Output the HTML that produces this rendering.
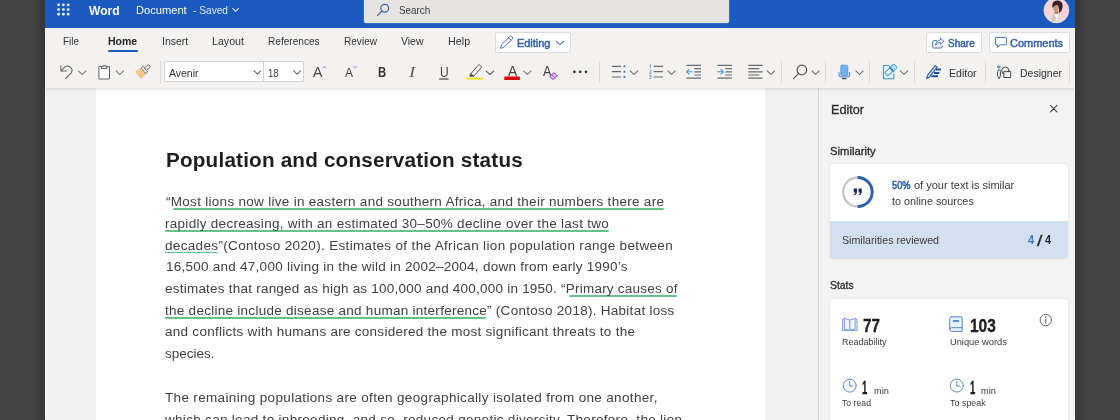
<!DOCTYPE html>
<html lang="en">
<head>
<meta charset="utf-8">
<title>Word - Document</title>
<style>
html,body{margin:0;padding:0;}
body{width:1120px;height:420px;overflow:hidden;position:relative;background:#444;font-family:"Liberation Sans",sans-serif;}
.abs{position:absolute;}
.t{position:absolute;white-space:pre;line-height:1;transform-origin:0 50%;filter:blur(.3px);}
#bandL{left:0;top:0;width:45px;height:420px;background:linear-gradient(to right,#444 0,#444 32px,#393939 44px,#383838 45px);}
#bandR{left:1075px;top:0;width:45px;height:420px;background:linear-gradient(to right,#383838 0,#3a3a3a 2px,#444 12px,#444 100%);}
#app{left:45px;top:0;width:1030px;height:420px;background:#f3f3f3;overflow:hidden;}
#hdr{left:45px;top:0;width:1030px;height:28px;background:#1b5abe;}
#search{left:364px;top:-2px;width:364.5px;height:24.5px;background:#e6e4e2;border-radius:0 0 2px 2px;box-shadow:0 0 1.5px rgba(255,255,255,.6);}
#ribbon{left:45px;top:28px;width:1030px;height:60px;background:#f3f2f1;box-shadow:0 1px 4px rgba(0,0,0,.14);}
#docbg{left:45px;top:88px;width:1030px;height:332px;background:#f2f2f2;}
#page{left:96px;top:88px;width:669px;height:332px;background:#fff;}
#pane{left:818px;top:88px;width:257px;height:332px;background:#f3f3f3;border-left:1px solid #d2d2d2;box-sizing:border-box;}
#edgeL{left:45px;top:28px;width:1px;height:392px;background:rgba(255,255,255,.55);}
#edgeR{left:1074px;top:28px;width:1px;height:392px;background:rgba(255,255,255,.55);}
.btn{background:#fff;border:1px solid #dddcdb;border-radius:2px;box-sizing:border-box;}
.sep{width:1px;background:#dad9d8;top:61px;height:22px;}
.card{background:#fff;border-radius:3px;box-shadow:0 0.5px 2px rgba(0,0,0,.12);}
.ul{height:1.6px;background:#66c387;border-radius:1px;}
svg{position:absolute;left:0;top:0;overflow:visible;filter:blur(.3px);}
</style>
</head>
<body>
<div id="bandL" class="abs"></div>
<div id="bandR" class="abs"></div>
<div id="app" class="abs"></div>
<div id="docbg" class="abs"></div>
<div id="page" class="abs"></div>
<div id="pane" class="abs"></div>
<div id="ribbon" class="abs"></div>
<div id="hdr" class="abs"></div>
<div id="search" class="abs"></div>
<div id="edgeL" class="abs"></div>
<div id="edgeR" class="abs"></div>

<!-- ribbon chrome -->
<div class="abs" style="left:108px;top:49.8px;width:29.5px;height:2.4px;background:#1b5abe;border-radius:1.2px"></div>
<div class="abs btn" style="left:494.5px;top:32px;width:76px;height:20.6px"></div>
<div class="abs btn" style="left:926.4px;top:32px;width:55.3px;height:20.6px"></div>
<div class="abs btn" style="left:988.5px;top:32px;width:81.3px;height:20.6px"></div>
<div class="abs" style="left:164px;top:61.4px;width:139.6px;height:21px;background:#fff;border:1px solid #d4d3d2;box-sizing:border-box;border-radius:1px"></div>
<div class="abs" style="left:263.2px;top:62px;width:1px;height:20px;background:#d4d3d2"></div>
<div class="abs sep" style="left:160.3px"></div>
<div class="abs sep" style="left:599.3px"></div>
<div class="abs sep" style="left:780.7px"></div>
<div class="abs sep" style="left:825.2px"></div>
<div class="abs sep" style="left:869.2px"></div>
<div class="abs sep" style="left:914px"></div>
<div class="abs sep" style="left:984.5px"></div>
<div class="abs sep" style="left:1069.3px"></div>

<!-- editor pane cards -->
<div class="abs card" style="left:829.5px;top:164.3px;width:238px;height:93.3px;overflow:hidden"><div class="abs" style="left:0;top:56.4px;width:238px;height:37px;background:#d3e0f2"></div></div>
<div class="abs card" style="left:829.5px;top:298.6px;width:238px;height:130px"></div>

<!-- document underlines -->
<div class="abs ul" style="left:172.5px;top:208.3px;width:491.5px"></div>
<div class="abs ul" style="left:165px;top:230px;width:444px"></div>
<div class="abs ul" style="left:165px;top:251.8px;width:53px"></div>
<div class="abs ul" style="left:569px;top:295.3px;width:108.4px"></div>
<div class="abs ul" style="left:165px;top:317px;width:321.4px"></div>

<span class="t" style='left:89.00px;top:4.00px;font-size:13px;color:#fff;font-weight:bold;transform:scaleX(0.9247);'>Word</span>
<span class="t" style='left:135.60px;top:5.00px;font-size:10.5px;color:#fff;transform:scaleX(1.0594);'>Document</span>
<span class="t" style='left:192.50px;top:5.00px;font-size:10.5px;color:#dfe8f6;transform:scaleX(0.9672);'>- Saved</span>
<span class="t" style='left:398.70px;top:5.00px;font-size:11px;color:#3a3a3a;transform:scaleX(0.8979);'>Search</span>
<span class="t" style='left:62.50px;top:36.00px;font-size:11px;color:#333;transform:scaleX(0.8966);'>File</span>
<span class="t" style='left:107.90px;top:36.00px;font-size:11px;color:#252525;font-weight:bold;transform:scaleX(0.9554);'>Home</span>
<span class="t" style='left:161.50px;top:36.00px;font-size:11px;color:#333;transform:scaleX(0.9558);'>Insert</span>
<span class="t" style='left:212.00px;top:36.00px;font-size:11px;color:#333;transform:scaleX(0.9688);'>Layout</span>
<span class="t" style='left:268.10px;top:36.00px;font-size:11px;color:#333;transform:scaleX(0.9171);'>References</span>
<span class="t" style='left:344.00px;top:36.00px;font-size:11px;color:#333;transform:scaleX(0.9147);'>Review</span>
<span class="t" style='left:401.30px;top:36.00px;font-size:11px;color:#333;transform:scaleX(0.9511);'>View</span>
<span class="t" style='left:447.80px;top:36.00px;font-size:11px;color:#333;transform:scaleX(0.9812);'>Help</span>
<span class="t" style='left:516.90px;top:39.00px;font-size:10.3px;color:#2d5cab;transform:scaleX(1.0608);-webkit-text-stroke:0.42px #2d5cab;'>Editing</span>
<span class="t" style='left:948.30px;top:39.00px;font-size:10.3px;color:#2d5cab;transform:scaleX(0.9715);-webkit-text-stroke:0.42px #2d5cab;'>Share</span>
<span class="t" style='left:1010.30px;top:39.00px;font-size:10.3px;color:#2d5cab;transform:scaleX(1.0647);-webkit-text-stroke:0.42px #2d5cab;'>Comments</span>
<span class="t" style='left:168.50px;top:68.00px;font-size:11px;color:#333;transform:scaleX(0.9521);'>Avenir</span>
<span class="t" style='left:267.80px;top:68.00px;font-size:11px;color:#333;transform:scaleX(0.8653);'>18</span>
<span class="t" style='left:312.50px;top:64.00px;font-size:15px;color:#444;transform:scaleX(0.9385);'>A</span>
<span class="t" style='left:345.00px;top:67.00px;font-size:12px;color:#444;transform:scaleX(0.9981);'>A</span>
<span class="t" style='left:377.50px;top:65.00px;font-size:14.7px;color:#333;font-weight:bold;transform:scaleX(0.7729);'>B</span>
<span class="t" style='left:409.40px;top:64.00px;font-size:15.5px;color:#5c5c5c;font-style:italic;font-family:"Liberation Serif", serif;transform:scaleX(1.1988);'>I</span>
<span class="t" style='left:439.50px;top:64.00px;font-size:15px;color:#444;transform:scaleX(0.8023);'>U</span>
<span class="t" style='left:507.60px;top:64.00px;font-size:14.4px;color:#444;transform:scaleX(0.9574);'>A</span>
<span class="t" style='left:542.80px;top:64.00px;font-size:14.6px;color:#444;transform:scaleX(0.8629);'>A</span>
<span class="t" style='left:949.40px;top:68.00px;font-size:11px;color:#333;transform:scaleX(0.9600);'>Editor</span>
<span class="t" style='left:1020.00px;top:68.00px;font-size:11px;color:#333;transform:scaleX(0.9539);'>Designer</span>
<span class="t" style='left:831.00px;top:104.00px;font-size:12.5px;color:#2a2a2a;transform:scaleX(1.0105);-webkit-text-stroke:0.3px #2a2a2a;'>Editor</span>
<span class="t" style='left:830.00px;top:146.00px;font-size:11px;color:#2a2a2a;transform:scaleX(1.0241);-webkit-text-stroke:0.3px #2a2a2a;'>Similarity</span>
<span class="t" style='left:892.00px;top:180.00px;font-size:10.5px;color:#2d5cab;transform:scaleX(0.8803);-webkit-text-stroke:0.5px #2d5cab;'>50%</span>
<span class="t" style='left:914.00px;top:180.00px;font-size:10.5px;color:#3a3a3a;transform:scaleX(1.0480);'>of your text is similar</span>
<span class="t" style='left:892.00px;top:196.00px;font-size:10.5px;color:#3a3a3a;transform:scaleX(1.0303);'>to online sources</span>
<span class="t" style='left:842.00px;top:235.00px;font-size:10.5px;color:#3a3a3a;transform:scaleX(1.0136);'>Similarities reviewed</span>
<span class="t" style='left:1028.10px;top:234.00px;font-size:12.4px;color:#3f72c0;font-weight:bold;transform:scaleX(0.8833);'>4</span>
<span class="t" style='left:1037.00px;top:234.00px;font-size:14.5px;color:#2a2a2a;transform:scaleX(1.3395);-webkit-text-stroke:0.3px #2a2a2a;'>/</span>
<span class="t" style='left:1045.30px;top:234.00px;font-size:12.4px;color:#1f2430;font-weight:bold;transform:scaleX(0.8833);'>4</span>
<span class="t" style='left:829.60px;top:280.00px;font-size:11px;color:#2a2a2a;transform:scaleX(0.9411);-webkit-text-stroke:0.3px #2a2a2a;'>Stats</span>
<span class="t" style='left:863.00px;top:318.00px;font-size:17.5px;color:#1c1c1c;font-weight:bold;transform:scaleX(0.8732);-webkit-text-stroke:0.3px #1c1c1c;'>77</span>
<span class="t" style='left:969.50px;top:318.00px;font-size:17.5px;color:#1c1c1c;font-weight:bold;transform:scaleX(0.8835);-webkit-text-stroke:0.3px #1c1c1c;'>103</span>
<span class="t" style='left:842.00px;top:338.00px;font-size:9px;color:#3a3a3a;transform:scaleX(0.9971);'>Readability</span>
<span class="t" style='left:949.80px;top:338.00px;font-size:9px;color:#3a3a3a;transform:scaleX(1.0321);'>Unique words</span>
<span class="t" style='left:862.30px;top:380.00px;font-size:17.5px;color:#1c1c1c;font-weight:bold;transform:scaleX(0.5445);-webkit-text-stroke:0.3px #1c1c1c;'>1</span>
<span class="t" style='left:873.60px;top:386.00px;font-size:9.5px;color:#3a3a3a;transform:scaleX(0.9665);'>min</span>
<span class="t" style='left:969.80px;top:380.00px;font-size:17.5px;color:#1c1c1c;font-weight:bold;transform:scaleX(0.5445);-webkit-text-stroke:0.3px #1c1c1c;'>1</span>
<span class="t" style='left:981.00px;top:386.00px;font-size:9.5px;color:#3a3a3a;transform:scaleX(0.9665);'>min</span>
<span class="t" style='left:842.00px;top:399.00px;font-size:9px;color:#3a3a3a;transform:scaleX(0.9657);'>To read</span>
<span class="t" style='left:949.60px;top:399.00px;font-size:9px;color:#3a3a3a;transform:scaleX(0.9936);'>To speak</span>
<span class="t" style='left:165.80px;top:151.00px;font-size:19.5px;color:#1e1e1e;font-weight:bold;letter-spacing:0.183px;transform:scaleX(1.06);'>Population and conservation status</span>
<span class="t" style='left:166.00px;top:196.00px;font-size:12.5px;color:#404040;letter-spacing:0.269px;transform:scaleX(1.08);'>“Most lions now live in eastern and southern Africa, and their numbers there are</span>
<span class="t" style='left:165.00px;top:218.00px;font-size:12.5px;color:#404040;letter-spacing:0.266px;transform:scaleX(1.08);'>rapidly decreasing, with an estimated 30–50% decline over the last two</span>
<span class="t" style='left:165.00px;top:240.00px;font-size:12.5px;color:#404040;letter-spacing:0.311px;transform:scaleX(1.08);'>decades”(Contoso 2020). Estimates of the African lion population range between</span>
<span class="t" style='left:166.00px;top:261.00px;font-size:12.5px;color:#404040;letter-spacing:0.234px;transform:scaleX(1.08);'>16,500 and 47,000 living in the wild in 2002–2004, down from early 1990’s</span>
<span class="t" style='left:165.00px;top:283.00px;font-size:12.5px;color:#404040;letter-spacing:0.209px;transform:scaleX(1.08);'>estimates that ranged as high as 100,000 and 400,000 in 1950. “Primary causes of</span>
<span class="t" style='left:165.00px;top:305.00px;font-size:12.5px;color:#404040;letter-spacing:0.252px;transform:scaleX(1.08);'>the decline include disease and human interference” (Contoso 2018). Habitat loss</span>
<span class="t" style='left:165.00px;top:326.00px;font-size:12.5px;color:#404040;letter-spacing:0.253px;transform:scaleX(1.08);'>and conflicts with humans are considered the most significant threats to the</span>
<span class="t" style='left:165.00px;top:348.00px;font-size:12.5px;color:#404040;letter-spacing:-0.004px;transform:scaleX(1.08);'>species.</span>
<span class="t" style='left:165.00px;top:392.00px;font-size:12.5px;color:#404040;letter-spacing:0.312px;transform:scaleX(1.08);'>The remaining populations are often geographically isolated from one another,</span>
<span class="t" style='left:165.00px;top:414.00px;font-size:12.5px;color:#404040;letter-spacing:0.281px;transform:scaleX(1.08);'>which can lead to inbreeding, and so, reduced genetic diversity. Therefore, the lion</span>

<svg width="1120" height="420" viewBox="0 0 1120 420" fill="none" stroke-linecap="round" stroke-linejoin="round">
<defs>
<clipPath id="avc"><circle cx="1056.4" cy="10.3" r="12.6"/></clipPath>
</defs>
<!-- waffle -->
<g fill="#fff">
<circle cx="58.6" cy="4.8" r="1.35"/><circle cx="63.4" cy="4.8" r="1.35"/><circle cx="68.2" cy="4.8" r="1.35"/>
<circle cx="58.6" cy="9.5" r="1.35"/><circle cx="63.4" cy="9.5" r="1.35"/><circle cx="68.2" cy="9.5" r="1.35"/>
<circle cx="58.6" cy="14.2" r="1.35"/><circle cx="63.4" cy="14.2" r="1.35"/><circle cx="68.2" cy="14.2" r="1.35"/>
</g>
<!-- saved chevron -->
<path d="M232.8 8.3 L235.7 11.3 L238.6 8.3" stroke="#dfe8f6" stroke-width="1.1"/>
<!-- header search -->
<g stroke="#3f5f9c" stroke-width="1.2"><circle cx="384.7" cy="8.2" r="3.9"/><path d="M381.9 11 L377.6 15.3"/></g>
<!-- avatar -->
<g clip-path="url(#avc)">
<rect x="1043" y="-3" width="27" height="27" fill="#f6d3d8"/>
<path d="M1048.5 24 C1048.8 17.5 1051 14 1054.4 12.8 L1060 12.4 C1063 13.6 1064.6 17 1065 24 Z" fill="#e4dcd3"/>
<path d="M1051.5 24 C1051.6 19 1052.6 15.5 1054.2 13.4 L1055.6 19 Z" fill="#cfc4b8"/>
<path d="M1054.8 13.6 L1056.8 21 L1058.6 13.4 Z" fill="#f8f5f2"/>
<path d="M1054.6 10.5 H1058.2 V14 H1054.6 Z" fill="#b98972"/>
<ellipse cx="1055.8" cy="7.8" rx="2.7" ry="3.7" fill="#c9977f"/>
<path d="M1052.6 8 C1051.4 3.2 1053.8 0.2 1057.6 0.4 C1061.6 0.6 1063.4 4 1062.4 7.8 C1061.800 10.6 1060.600 12.400 1058.800 13 C1059.600 10 1059 7 1057.700 5.200 C1056 4.700 1054.200 5.600 1052.600 8 Z" fill="#3b2023"/>
</g>
<circle cx="1056.4" cy="10.3" r="12.6" stroke="#efe3f2" stroke-opacity=".5" stroke-width=".8"/>

<!-- ===== toolbar row ===== -->
<g stroke="#646464" stroke-width="1.02">
<!-- undo -->
<path d="M60.9 65.7 V71 H66.2"/>
<path d="M61.3 70.7 L64.6 67.2 A4.4 4.4 0 0 1 71.2 72.9 L65.8 78.7"/>
<path d="M78.5 71 L82.2 74.5 L85.9 71"/>
<!-- clipboard -->
<path d="M101.4 66.6 H99.6 A0.7 0.7 0 0 0 98.9 67.3 V78.3 A0.7 0.7 0 0 0 99.6 79 H108.8 A0.7 0.7 0 0 0 109.5 78.3 V67.3 A0.7 0.7 0 0 0 108.8 66.6 H107" fill="#fbfbfb"/>
<path d="M101.5 68.6 V66.6 H102.8 A1.45 1.45 0 0 1 105.6 66.6 H106.9 V68.6 Z" fill="#f3f2f1"/>
<path d="M116.2 71 L119.8 74.5 L123.4 71"/>
<!-- font chevrons -->
<path d="M254 70.7 L257.4 74.2 L260.8 70.7"/>
<path d="M293.6 70.7 L297.1 74.2 L300.7 70.7"/>
<!-- chevrons -->
<path d="M486.2 71 L490 74.5 L493.8 71"/>
<path d="M523.7 71 L527.3 74.5 L531 71"/>
<path d="M630.2 70.8 L634 74.5 L637.8 70.8"/>
<path d="M667.9 70.8 L671.5 74.5 L675.2 70.8"/>
<path d="M767.3 70.8 L770.9 74.5 L774.6 70.8"/>
<path d="M812 70.8 L815.5 74.5 L819.1 70.8"/>
<path d="M855.9 70.8 L859.6 74.5 L863.2 70.8"/>
<path d="M900.4 70.8 L904 74.5 L907.7 70.8"/>
</g>
<!-- format painter -->
<g transform="translate(144.200 70.4) rotate(50)">
<path d="M-3.3 1 H3.3 L4.3 7.600 H-4.3 Z" fill="#f3c283" stroke="#efb56c" stroke-width=".5"/>
<path d="M-1.500 2 V7 M1.200 2 V7" stroke="#f8dcb4" stroke-width=".8"/>
<rect x="-3.400" y="-1.900" width="6.800" height="2.900" fill="#f6f5f4" stroke="#6a6a6a" stroke-width=".9"/>
<rect x="-1.300" y="-7" width="2.600" height="5.100" fill="#f6f5f4" stroke="#6a6a6a" stroke-width=".9"/>
</g>
<!-- grow/shrink carets -->
<path d="M322.6 68 L324.2 66.2 L325.8 68" stroke="#78abd6" stroke-width="1"/>
<path d="M353.6 66.3 L355.2 68.1 L356.8 66.3" stroke="#78abd6" stroke-width="1"/>
<!-- U underline -->
<path d="M439.2 79 H448.5" stroke="#505050" stroke-width="1.3" stroke-linecap="butt"/>
<!-- highlighter -->
<rect x="466.2" y="77.4" width="16.8" height="2.4" rx=".8" fill="#e8ea3c"/>
<path d="M473.2 74.6 L480.4 66.2 A1.2 1.2 0 0 0 480.2 64.6 L479 63.6 A1.2 1.2 0 0 0 477.4 63.8 L470.2 72.2 Z" transform="translate(0.7,1.5)" fill="#fff" stroke="#4d4d4d" stroke-width="1"/>
<path d="M470.900 73.700 L473.900 76.100 L470.5 76.700 L469.700 76.100 Z" fill="#4d4d4d" stroke="#4d4d4d" stroke-width=".6"/>
<!-- font colour bar -->
<rect x="504.3" y="76.4" width="15.5" height="3.5" rx=".5" fill="#d8000f"/>
<!-- eraser -->
<path d="M549.8 76.4 L554.2 72.8 L557.2 75.8 L552.8 79.4 Z" fill="#e3c4ee" stroke="#a863c4" stroke-width="1.1"/>
<path d="M551.8 74.8 L554.8 77.8" stroke="#a863c4" stroke-width="1"/>
<!-- more dots -->
<g fill="#333"><circle cx="574.4" cy="71.8" r="1.35"/><circle cx="580.2" cy="71.8" r="1.35"/><circle cx="586" cy="71.8" r="1.35"/></g>
<!-- bullets -->
<g stroke="#6a6a6a" stroke-width="1.2" stroke-linecap="butt">
<path d="M611.8 66.3 H621 M611.8 71.7 H621 M611.8 77 H621"/>
<path d="M653.6 66.3 H663 M653.6 71.7 H663 M653.6 77 H663"/>
<path d="M686.4 65.4 H701 M694.3 68.6 H701 M694.3 71.8 H701 M694.3 75 H701 M686.4 78.1 H701"/>
<path d="M717.5 65.4 H731.9 M725.5 68.6 H731.9 M725.5 71.8 H731.9 M725.5 75 H731.9 M717.5 78.1 H731.9"/>
<path d="M748.3 65.4 H762.6 M748.3 68.6 H759.4 M748.3 71.8 H762.6 M748.3 75 H759.4 M748.3 78.1 H762.6"/>
</g>
<g fill="#2f72b8"><circle cx="624.4" cy="66.3" r="1.05"/><circle cx="624.4" cy="71.7" r="1.05"/><circle cx="624.4" cy="77" r="1.05"/></g>
<g stroke="#4b93cc" stroke-width=".8">
<path d="M649.6 65.3 L650.5 64.6 V67.8"/>
<path d="M649.4 70.6 C649.9 69.8 651.4 69.9 651.3 71 C651.2 71.8 649.6 72.6 649.4 73.3 H651.5"/>
<path d="M649.4 75.6 H651.3 L650.3 76.9 C651.6 76.9 651.7 78.7 650.3 78.7 C649.8 78.7 649.5 78.5 649.3 78.2"/>
</g>
<g stroke="#4b93cc" stroke-width="1.1">
<path d="M686.7 71.8 H692 M689 69.4 L686.6 71.8 L689 74.2"/>
<path d="M717.7 71.8 H723.2 M720.9 69.4 L723.3 71.8 L720.9 74.2"/>
</g>
<!-- find -->
<g stroke="#555" stroke-width="1.2"><circle cx="801.9" cy="70" r="4.8"/><path d="M798.4 73.6 L793.6 78.6"/></g>
<!-- mic -->
<rect x="840.8" y="65.2" width="7" height="10.8" rx="1.6" fill="#6fb2ee" stroke="#4a8fd4" stroke-width=".8"/>
<path d="M839 72.6 V74.6 A2.4 2.4 0 0 0 841.4 77 H847.2 A2.4 2.4 0 0 0 849.6 74.6 V72.6" stroke="#4f86c4" stroke-width="1.1"/>
<path d="M842.6 78.7 H846" stroke="#3f4f66" stroke-width="1.3"/>
<!-- sensitivity -->
<path d="M889 65.5 H883.4 V78.7 H893.9 V74" fill="#e6f6fd" stroke="#3f92cc" stroke-width="1.1"/>
<g transform="rotate(-42 890.6 70.2)">
<rect x="884.6" y="68" width="7" height="4.4" rx=".6" fill="#eefaff" stroke="#3f92cc" stroke-width="1"/>
<rect x="892.4" y="67.4" width="5.2" height="5.6" rx="2" fill="#b9ddf5" stroke="#4aa0da" stroke-width=".9"/>
<path d="M892 67 V73.400" stroke="#2f7fc0" stroke-width="1.3"/>
</g>
<!-- editor icon -->
<path d="M926.5 78.6 L927.6 75.2 L935.2 65.6 L937.2 67.2 L929.6 76.9 Z" stroke="#2b5fb4" stroke-width="1.1" fill="#cfdcf3"/>
<g stroke="#1f4fa3" stroke-width="2" stroke-linecap="butt"><path d="M936 69.5 H941 M934 72.9 H939.4 M931.4 76.2 H938"/></g>
<!-- designer icon -->
<g stroke="#4a4a4a" stroke-width="1">
<circle cx="1005.3" cy="70.6" r="3.6"/>
<rect x="1004.2" y="71.6" width="6.5" height="5.9" fill="#f3f2f1"/>
<path d="M998.4 69.8 C997.1 72 997 76.2 999 78.8 C1001 76.2 1001 72 999.9 69.8"/>
</g>
<circle cx="998.8" cy="67" r="1.3" fill="#5aa0e0" stroke="#3b86d0" stroke-width=".6"/>

<!-- ===== tab row buttons ===== -->
<!-- pencil -->
<path d="M500.7 48 L501.6 44.6 L509.8 36.6 A1.5 1.5 0 0 1 511.9 36.6 L512.3 37 A1.5 1.5 0 0 1 512.3 39.1 L504.1 47.1 Z M508.6 37.8 L511.1 40.3" stroke="#3f6fbe" stroke-width=".95"/>
<path d="M556.3 41.3 L560 44.6 L563.7 41.3" stroke="#4a6ea8" stroke-width="1.1"/>
<!-- share -->
<path d="M936.6 40.7 H933.6 A0.9 0.9 0 0 0 932.7 41.6 V47.1 A0.9 0.9 0 0 0 933.6 48 H941.2 A0.9 0.9 0 0 0 942.1 47.1 V45.6" stroke="#3f6fbe" stroke-width="1"/>
<path d="M935.6 45 C935.8 41.8 937.8 40.2 940.4 40.1 V38 L943.9 41.2 L940.4 44.4 V42.3 C938.6 42.3 936.8 43 935.6 45 Z" stroke="#3f6fbe" stroke-width=".9"/>
<!-- comment -->
<path d="M996.2 37.4 H1005.6 A0.8 0.8 0 0 1 1006.4 38.2 V44 A0.8 0.8 0 0 1 1005.6 44.8 H1000.4 L997.6 47.3 V44.8 H996.2 A0.8 0.8 0 0 1 995.4 44 V38.2 A0.8 0.8 0 0 1 996.2 37.4 Z" stroke="#3f6fbe" stroke-width="1"/>

<!-- ===== editor pane ===== -->
<path d="M1050.4 105.4 L1057 111.8 M1057 105.4 L1050.4 111.8" stroke="#444" stroke-width="1.1"/>
<!-- ring -->
<circle cx="857.7" cy="192" r="14.5" stroke="#c6c6c6" stroke-width="2.4"/>
<path d="M857.7 177.5 A14.5 14.5 0 0 1 857.7 206.500" stroke="#2b5fb4" stroke-width="2.9" stroke-linecap="butt"/>
<g fill="#1b2a5c">
<path d="M853.7 188.6 H857 V191.8 C857 193.6 856 194.8 854.2 195.2 L853.8 194.3 C854.7 194 855.2 193.3 855.2 192.4 H853.7 Z"/>
<path d="M858.5 188.6 H861.8 V191.8 C861.8 193.6 860.8 194.8 859 195.2 L858.6 194.3 C859.5 194 860 193.3 860 192.4 H858.5 Z"/>
</g>
<!-- open book -->
<g stroke="#7d9eda" stroke-width="1" fill="#f4f7fd">
<path d="M842.6 319.4 L844.4 318.4 V329.2 L849.8 330.2 V320 L844.4 318.4 M842.6 319.4 V330.4 L849.8 330.4"/>
<path d="M857 319.4 L855.2 318.4 V329.2 L849.8 330.2 V320 L855.2 318.4 M857 319.4 V330.4 L849.8 330.4"/>
</g>
<!-- closed book -->
<path d="M951.4 316.8 H961.2 A1 1 0 0 1 962.2 317.800 V331.4 H951.600 A1.9 1.9 0 0 1 949.7 329.5 V318.5 A1.7 1.7 0 0 1 951.4 316.800 Z" fill="#e9f0fb" stroke="#5b86d0" stroke-width="1"/>
<path d="M949.8 329.4 A1.8 1.8 0 0 1 951.600 327.700 H962" stroke="#5b86d0" stroke-width="1"/>
<rect x="952.8" y="320" width="6.4" height="2" rx=".8" fill="#5b86d0"/>
<!-- info -->
<circle cx="1045.800" cy="320" r="5.7" stroke="#5a5a5a" stroke-width=".9"/>
<path d="M1045.800 319.2 V323" stroke="#5a5a5a" stroke-width="1"/><circle cx="1045.800" cy="317.300" r=".7" fill="#5a5a5a"/>
<!-- clocks -->
<g stroke="#5b86d0" stroke-width="1">
<circle cx="849.7" cy="385.600" r="6.500"/><path d="M849.7 381.600 V386 H853"/>
<circle cx="956.8" cy="385.600" r="6.500"/><path d="M956.8 381.600 V386 H960.1"/>
</g>
</svg>

</body>
</html>
